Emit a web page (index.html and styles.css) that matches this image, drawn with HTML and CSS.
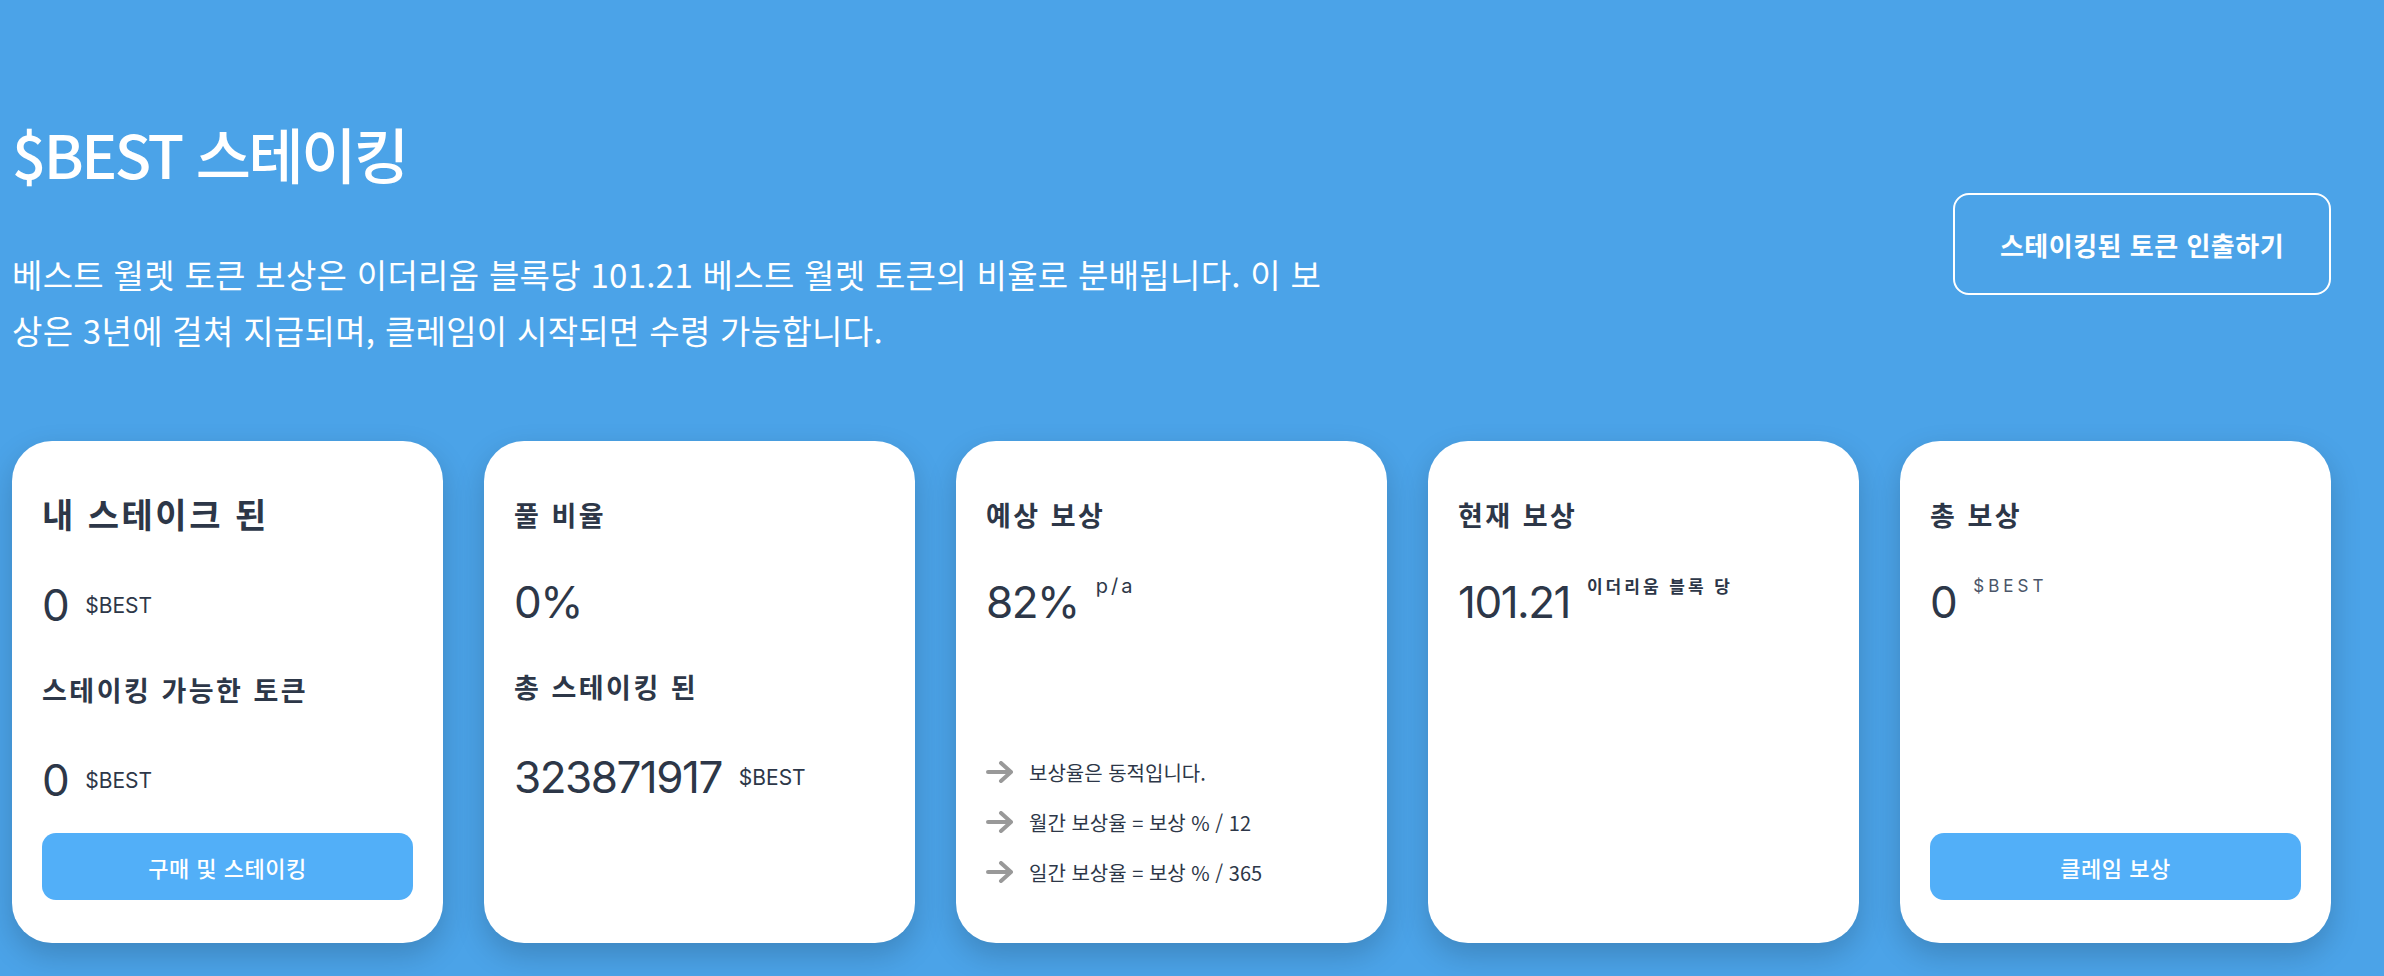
FILE: index.html
```html
<!DOCTYPE html>
<html lang="ko">
<head>
    <meta charset="UTF-8">
    <meta name="viewport" content="width=device-width, initial-scale=1.0">
    <title>$BEST 스테이킹</title>
    <link rel="stylesheet" href="styles.css">
</head>
<body>

<main class="page">
    <section class="intro">
        <div class="intro-text">
            <h1 class="title">$BEST 스테이킹</h1>
            <p class="lead">베스트 월렛 토큰 보상은 이더리움 블록당 101.21 베스트 월렛 토큰의 비율로 분배됩니다. 이 보상은 3년에 걸쳐 지급되며, 클레임이 시작되면 수령 가능합니다.</p>
        </div>
        <button class="btn-outline">스테이킹된 토큰 인출하기</button>
    </section>

    <section class="cards">
        <div class="card">
            <h2 class="card-title card-title-lg">내 스테이크 된</h2>
            <div class="amount">
                <span class="num">0</span>
                <span class="unit">$BEST</span>
            </div>
            <h3 class="card-title card-title-next">스테이킹 가능한 토큰</h3>
            <div class="amount amount-next">
                <span class="num">0</span>
                <span class="unit">$BEST</span>
            </div>
            <button class="btn-fill">구매 및 스테이킹</button>
        </div>

        <div class="card">
            <h3 class="card-title">풀 비율</h3>
            <div class="amount">
                <span class="num">0%</span>
            </div>
            <h3 class="card-title card-title-next">총 스테이킹 된</h3>
            <div class="amount amount-next">
                <span class="num">323871917</span>
                <span class="unit">$BEST</span>
            </div>
        </div>

        <div class="card">
            <h3 class="card-title">예상 보상</h3>
            <div class="amount amount-sup">
                <span class="num">82%</span>
                <span class="sup sup-latin">p/a</span>
            </div>
            <ul class="notes">
                <li>
                    <svg class="arrow" width="27" height="22" viewBox="0 0 27 22"><path d="M2 11H25M15 2L25 11L15 20" fill="none" stroke="#999" stroke-width="4" stroke-linecap="round" stroke-linejoin="round"/></svg>
                    보상율은 동적입니다.
                </li>
                <li>
                    <svg class="arrow" width="27" height="22" viewBox="0 0 27 22"><path d="M2 11H25M15 2L25 11L15 20" fill="none" stroke="#999" stroke-width="4" stroke-linecap="round" stroke-linejoin="round"/></svg>
                    월간 보상율 = 보상 % / 12
                </li>
                <li>
                    <svg class="arrow" width="27" height="22" viewBox="0 0 27 22"><path d="M2 11H25M15 2L25 11L15 20" fill="none" stroke="#999" stroke-width="4" stroke-linecap="round" stroke-linejoin="round"/></svg>
                    일간 보상율 = 보상 % / 365
                </li>
            </ul>
        </div>

        <div class="card">
            <h3 class="card-title">현재 보상</h3>
            <div class="amount amount-sup">
                <span class="num">101.21</span>
                <span class="sup sup-bold">이더리움 블록 당</span>
            </div>
        </div>

        <div class="card">
            <h3 class="card-title">총 보상</h3>
            <div class="amount amount-sup">
                <span class="num">0</span>
                <span class="sup sup-spaced">$BEST</span>
            </div>
            <button class="btn-fill">클레임 보상</button>
        </div>
    </section>
</main>

</body>
</html>
```

FILE: styles.css
```css
/* Stránka staking */
body {
    margin: 0;
    background-color: #4ba3e8;
    font-family: "Noto Sans CJK KR", sans-serif;
    color: #2d3748;
}
.page {
    padding: 117px 53px 40px 12px;
}

/* horní část */
.intro {
    display: flex;
    align-items: center;
    justify-content: space-between;
}
.intro-text {
    width: 1330px;
}
.title {
    margin: 0;
    font-size: 60px;
    line-height: 72px;
    font-weight: 500;
    letter-spacing: -2.5px;
    color: #ffffff;
}
.lead {
    margin: 57px 0 0;
    font-size: 33px;
    line-height: 56px;
    letter-spacing: 0.3px;
    color: #ffffff;
}
.btn-outline {
    width: 378px;
    height: 102px;
    margin-top: 13px;
    border: 2px solid #ffffff;
    border-radius: 16px;
    background: transparent;
    color: #ffffff;
    font-family: "Noto Sans CJK KR", sans-serif;
    font-size: 26px;
    font-weight: 600;
    letter-spacing: 0.5px;
    cursor: pointer;
}

/* karty */
.cards {
    display: grid;
    grid-template-columns: repeat(5, 1fr);
    gap: 41px;
    margin-top: 83px;
}
.card {
    display: flex;
    flex-direction: column;
    height: 502px;
    box-sizing: border-box;
    padding: 40px 30px 43px;
    background: #ffffff;
    border-radius: 40px;
    box-shadow: 0 12px 30px rgba(0, 0, 0, 0.18);
}
.card-title {
    margin: 14px 0 0;
    font-size: 27px;
    line-height: 40px;
    font-weight: 700;
    letter-spacing: 2.5px;
}
.card-title-lg {
    margin-top: 9px;
    font-size: 34px;
    line-height: 48px;
    letter-spacing: 2.5px;
}
.card-title-next {
    margin-top: 35px;
}
.amount {
    display: flex;
    align-items: center;
    height: 60px;
    margin-top: 37px;
}
.amount-next {
    margin-top: 40px;
}
.amount-sup {
    align-items: flex-start;
}
.num {
    font-family: Inter, sans-serif;
    font-size: 44px;
    line-height: 60px;
    letter-spacing: -1.5px;
}
.unit {
    margin-left: 17px;
    font-family: Inter, sans-serif;
    font-size: 21px;
}
.sup {
    margin: 4px 0 0 17px;
    line-height: 20px;
}
.sup-latin {
    font-family: Inter, sans-serif;
    font-size: 20px;
    letter-spacing: 3px;
}
.sup-bold {
    font-size: 17px;
    font-weight: 700;
    letter-spacing: 3px;
}
.sup-spaced {
    font-family: Inter, sans-serif;
    font-size: 17px;
    letter-spacing: 4px;
    color: #4a5568;
}

/* seznam v kartě */
.notes {
    margin: auto 0 3px;
    padding: 0;
    list-style: none;
}
.notes li {
    display: flex;
    align-items: center;
    gap: 16px;
    height: 50px;
    font-size: 20px;
}
.arrow {
    flex-shrink: 0;
}

.btn-fill {
    width: 100%;
    height: 67px;
    margin-top: auto;
    border: none;
    border-radius: 14px;
    background-color: #52aff8;
    color: #ffffff;
    font-family: "Noto Sans CJK KR", sans-serif;
    font-size: 22px;
    font-weight: 500;
    letter-spacing: 0.5px;
    cursor: pointer;
}
```
